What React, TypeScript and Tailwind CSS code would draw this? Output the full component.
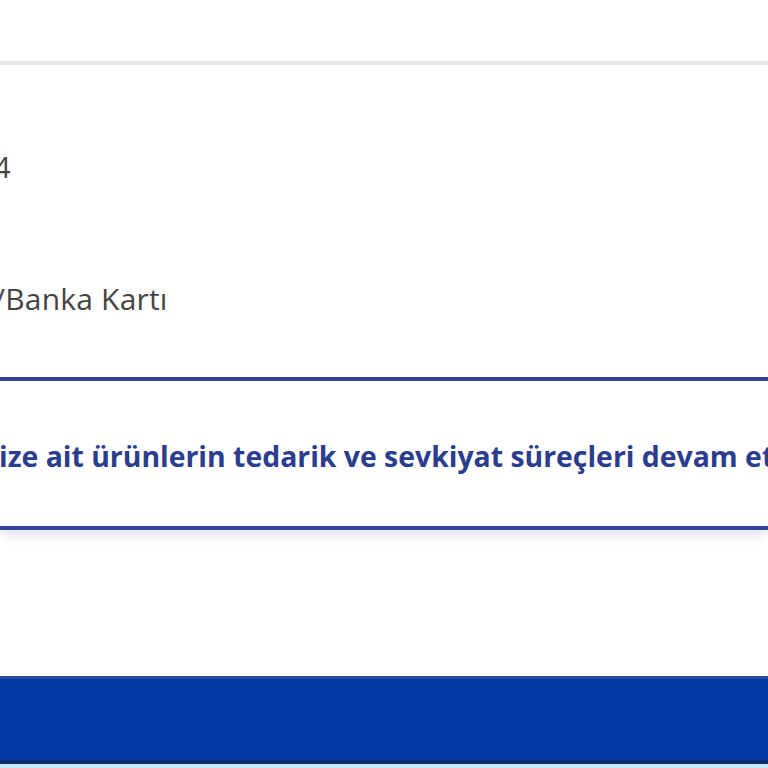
export default function App() {
  return (
    <div className="w-[768px] h-[768px] overflow-hidden bg-white flex flex-col font-['Open_Sans','Liberation_Sans',sans-serif]">
      {/* header strip */}
      <div className="h-[61px] shrink-0 border-b-[4px] border-[#e6e6e6] box-content" />

      {/* order summary rows */}
      <div className="h-[312px] shrink-0 flex flex-col pt-[84px] gap-[96px] overflow-hidden">
        <div className="h-[36px] leading-[36px] text-[29px] text-[#444] whitespace-nowrap -ml-[6px]">
          4
        </div>
        <div className="h-[36px] leading-[36px] text-[30px] text-[#444] whitespace-nowrap -ml-[6px] tracking-[0.2px]">
          /Banka Kartı
        </div>
      </div>

      {/* info notice */}
      <div className="h-[153px] shrink-0 border-y-[4px] border-[#33449b] shadow-[0_6px_10px_rgba(30,40,120,0.12)] flex items-center overflow-hidden">
        <p className="whitespace-nowrap text-[28.4px] font-bold text-[#2b3d8e] leading-[34px] mt-[4px] -ml-[1px]">
          ize ait ürünlerin tedarik ve sevkiyat süreçleri devam etmektedir.
        </p>
      </div>

      <div className="h-[146px] shrink-0" />

      {/* primary button */}
      <button className="h-[88px] shrink-0 w-full bg-[#0037a1] border-t-[3px] border-t-[#2a4a9c] border-b-[4px] border-b-[#0b2b6e]" />
      <div className="h-[4px] shrink-0 bg-[#c4e8ff]" />
    </div>
  );
}
